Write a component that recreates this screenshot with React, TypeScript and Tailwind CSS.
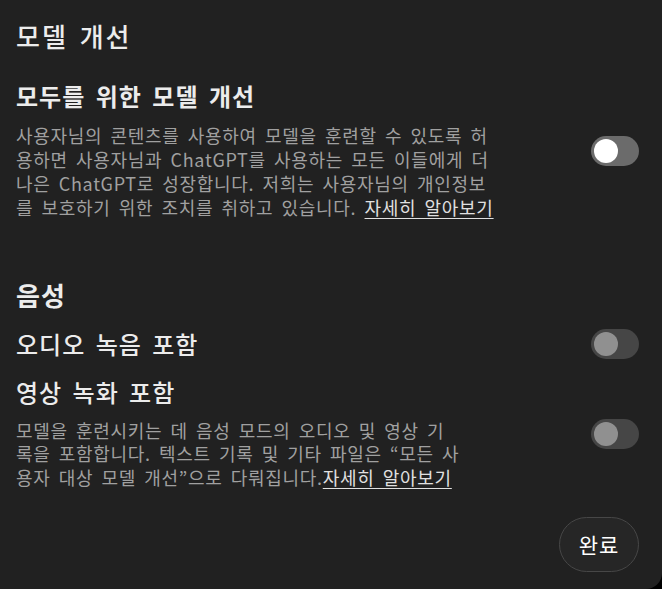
import React from "react";

function Toggle({ on = false, disabled = false }: { on?: boolean; disabled?: boolean }) {
  return (
    <div
      className={`w-[48px] h-[30px] shrink-0 rounded-full bg-[#6b6b6b] p-[3px] flex items-center ${
        disabled ? "opacity-50" : ""
      } ${on ? "justify-end" : "justify-start"}`}
    >
      <div className="w-[24px] h-[24px] rounded-full bg-white" />
    </div>
  );
}

export default function App() {
  return (
    <div className="w-[662px] h-[589px] bg-black overflow-hidden font-['Noto_Sans_CJK_KR',sans-serif]">
      <div className="w-full h-full bg-[#212121] rounded-br-[16px] pl-4 pr-[23px] pt-[20px] flex flex-col text-[#ececec]">
        <div className="text-[26px] leading-[32px] font-medium tracking-[2px] [word-spacing:4px]">모델 개선</div>

        <div className="mt-[30px] flex items-center gap-2">
          <div className="flex-1">
            <div className="text-[24px] leading-[28px] font-semibold tracking-[1px] [word-spacing:4px]">
              모두를 위한 모델 개선
            </div>
            <div className="mt-[13px] text-[18px] leading-[24px] text-[#a0a0a0] whitespace-nowrap tracking-[0.7px] [word-spacing:3.5px]">
              사용자님의 콘텐츠를 사용하여 모델을 훈련할 수 있도록 허<br />
              용하면 사용자님과 ChatGPT를 사용하는 모든 이들에게 더<br />
              나은 ChatGPT로 성장합니다. 저희는 사용자님의 개인정보<br />
              를 보호하기 위한 조치를 취하고 있습니다.{" "}
              <span className="text-[#e0e0e0] underline underline-offset-[3px]">자세히 알아보기</span>
            </div>
          </div>
          <Toggle />
        </div>

        <div className="mt-[60px] text-[26px] leading-[32px] font-bold tracking-[1px]">음성</div>

        <div className="mt-[18px] flex items-center gap-2">
          <div className="flex-1 text-[24px] leading-[28px] font-medium tracking-[1px] [word-spacing:4px]">
            오디오 녹음 포함
          </div>
          <Toggle disabled />
        </div>

        <div className="mt-[19px] flex items-center gap-2">
          <div className="flex-1">
            <div className="text-[24px] leading-[28px] font-medium tracking-[1px] [word-spacing:4px]">
              영상 녹화 포함
            </div>
            <div className="mt-[12.5px] text-[18px] leading-[23.5px] text-[#a0a0a0] whitespace-nowrap tracking-[0.7px] [word-spacing:3.5px]">
              모델을 훈련시키는 데 음성 모드의 오디오 및 영상 기<br />
              록을 포함합니다. 텍스트 기록 및 기타 파일은 “모든 사<br />
              용자 대상 모델 개선”으로 다뤄집니다.
              <span className="text-[#e0e0e0] underline underline-offset-[3px]">자세히 알아보기</span>
            </div>
          </div>
          <Toggle disabled />
        </div>

        <div className="mt-[28px] flex justify-end">
          <button className="w-[80px] h-[55px] rounded-full border border-[#474747] bg-[#262626] text-white text-[21px] tracking-[1px] font-normal">
            완료
          </button>
        </div>
      </div>
    </div>
  );
}
